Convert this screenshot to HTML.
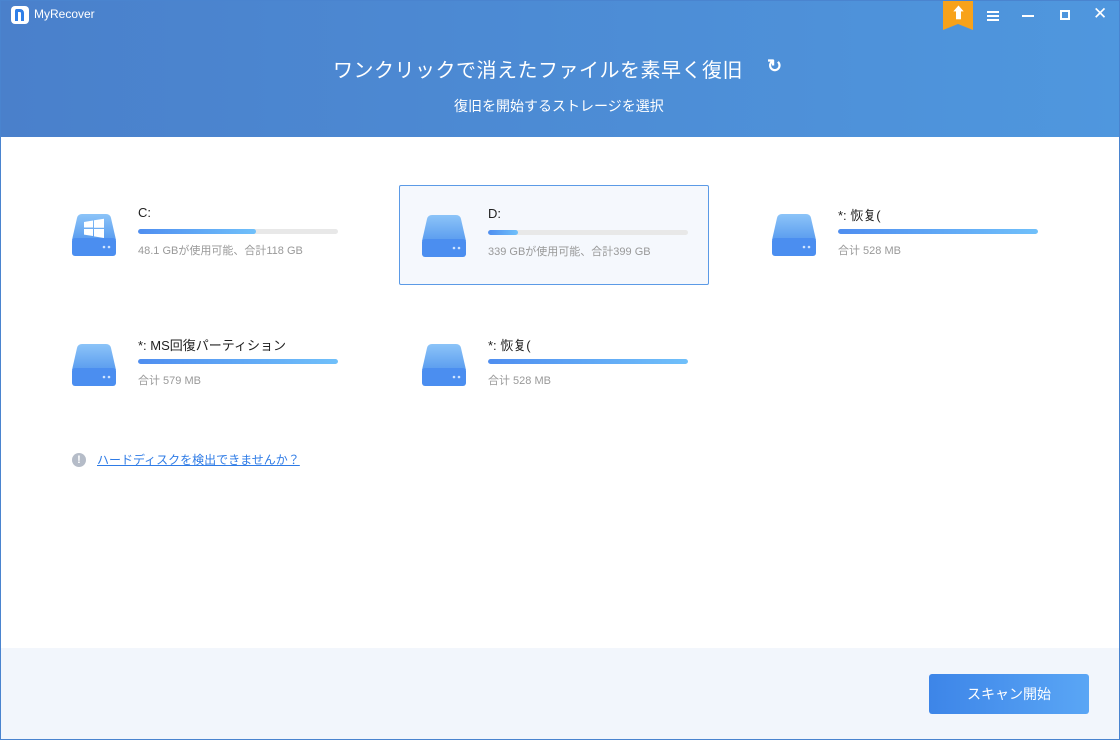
<!DOCTYPE html><html><head><meta charset="utf-8"><style>
*{margin:0;padding:0;box-sizing:border-box}
body{width:1120px;height:740px;overflow:hidden;background:#fff;font-family:"Liberation Sans","Noto Sans CJK JP",sans-serif;position:relative}
.hdr{position:absolute;left:0;top:0;width:1120px;height:137px;background:linear-gradient(90deg,#4a80cb,#4f97de)}
.t{position:absolute;color:#fff}
.card{position:absolute;width:310px;height:100px}
.card.sel{border:1px solid #5b9ae6;background:#f5f8fd;border-radius:2px}
.ic{position:absolute;left:12px;top:27px;width:44px;height:44px}
.nm{position:absolute;left:78px;top:20px;font-size:13px;color:#222}
.bar{position:absolute;left:78px;top:44px;width:200px;height:5px;background:#e8e8e8;border-radius:3px;overflow:hidden}
.bar i{display:block;height:100%;background:linear-gradient(90deg,#4f8ef0,#70c0fa);border-radius:3px}
.sz{position:absolute;left:78px;top:57px;font-size:11px;color:#999}
</style></head><body>
<div class="hdr"></div>
<div style="position:absolute;left:0;top:0;width:1120px;height:740px;border:1px solid #4a84cf;pointer-events:none;z-index:5"></div>
<div style="position:absolute;left:11px;top:6px;width:18px;height:18px;background:#fff;border-radius:4px"><div style="position:absolute;left:4px;top:3px;width:9px;height:12px;border:3px solid #2f7fe8;border-radius:2px 4px 0 0;border-bottom:none"></div></div>
<div class="t" style="left:34px;top:7px;font-size:12px">MyRecover</div>
<div style="position:absolute;left:943px;top:0;width:30px;height:30px;background:#f8a21a;clip-path:polygon(0 0,100% 0,100% 100%,50% 80%,0 100%)"></div>
<div class="t" style="left:951px;top:2px;font-size:15px;font-weight:bold">⬆</div>
<div style="position:absolute;left:987px;top:11px;width:12px;height:2px;background:#fff;box-shadow:0 4px #fff,0 8px #fff"></div>
<div style="position:absolute;left:1022px;top:15px;width:12px;height:2px;background:#fff"></div>
<div style="position:absolute;left:1060px;top:10px;width:10px;height:10px;border:2px solid #fff"></div>
<div class="t" style="left:1093px;top:4px;font-size:17px">✕</div>
<div class="t" style="left:333px;top:54px;font-size:20px;letter-spacing:0.5px">ワンクリックで消えたファイルを素早く復旧</div>
<div class="t" style="left:767px;top:56px;font-size:18px;font-weight:bold">↻</div>
<div class="t" style="left:454px;top:96px;font-size:14px">復旧を開始するストレージを選択</div>

<svg width="0" height="0" style="position:absolute"><defs><linearGradient id="g" x1="0" y1="0" x2="0" y2="1"><stop offset="0" stop-color="#8cc4f8"/><stop offset="1" stop-color="#5a9cef"/></linearGradient></defs></svg>
<div class="card" style="left:60px;top:185px"><svg class="ic" viewBox="0 0 44 44"><path d="M10 2h24q4 0 5 4l5 22H0l5-22q1-4 5-4z" fill="url(#g)"/><rect x="0" y="26" width="44" height="18" rx="3" fill="#4b8ef0"/><circle cx="32" cy="35" r="1.3" fill="#cfe4ff"/><circle cx="37" cy="35" r="1.3" fill="#cfe4ff"/><path d="M12 10l9-1.5v7h-9zM22 8.3l10-1.6v9H22zM12 17h9v7l-9-1.4zM22 17h10v9l-10-1.6z" fill="#fff"/></svg><div class="nm">C:</div><div class="bar"><i style="width:59%"></i></div><div class="sz">48.1 GBが使用可能、合計118 GB</div></div>
<div class="card sel" style="left:399px;top:185px"><svg class="ic" style="left:22px" viewBox="0 0 44 44"><path d="M10 2h24q4 0 5 4l5 22H0l5-22q1-4 5-4z" fill="url(#g)"/><rect x="0" y="26" width="44" height="18" rx="3" fill="#4b8ef0"/><circle cx="32" cy="35" r="1.3" fill="#cfe4ff"/><circle cx="37" cy="35" r="1.3" fill="#cfe4ff"/></svg><div class="nm" style="left:88px">D:</div><div class="bar" style="left:88px"><i style="width:15%"></i></div><div class="sz" style="left:88px">339 GBが使用可能、合計399 GB</div></div>
<div class="card" style="left:760px;top:185px"><svg class="ic" viewBox="0 0 44 44"><path d="M10 2h24q4 0 5 4l5 22H0l5-22q1-4 5-4z" fill="url(#g)"/><rect x="0" y="26" width="44" height="18" rx="3" fill="#4b8ef0"/><circle cx="32" cy="35" r="1.3" fill="#cfe4ff"/><circle cx="37" cy="35" r="1.3" fill="#cfe4ff"/></svg><div class="nm">*: 恢复(</div><div class="bar"><i style="width:100%"></i></div><div class="sz">合计 528 MB</div></div>
<div class="card" style="left:60px;top:315px"><svg class="ic" viewBox="0 0 44 44"><path d="M10 2h24q4 0 5 4l5 22H0l5-22q1-4 5-4z" fill="url(#g)"/><rect x="0" y="26" width="44" height="18" rx="3" fill="#4b8ef0"/><circle cx="32" cy="35" r="1.3" fill="#cfe4ff"/><circle cx="37" cy="35" r="1.3" fill="#cfe4ff"/></svg><div class="nm">*: MS回復パーティション</div><div class="bar"><i style="width:100%"></i></div><div class="sz">合计 579 MB</div></div>
<div class="card" style="left:410px;top:315px"><svg class="ic" viewBox="0 0 44 44"><path d="M10 2h24q4 0 5 4l5 22H0l5-22q1-4 5-4z" fill="url(#g)"/><rect x="0" y="26" width="44" height="18" rx="3" fill="#4b8ef0"/><circle cx="32" cy="35" r="1.3" fill="#cfe4ff"/><circle cx="37" cy="35" r="1.3" fill="#cfe4ff"/></svg><div class="nm">*: 恢复(</div><div class="bar"><i style="width:100%"></i></div><div class="sz">合计 528 MB</div></div>

<div style="position:absolute;left:72px;top:453px;width:14px;height:14px;border-radius:50%;background:#b5bcc8;color:#fff;font-size:11px;font-weight:bold;text-align:center;line-height:14px">!</div>
<div style="position:absolute;left:97px;top:451px;font-size:12px;color:#2e7be6;text-decoration:underline">ハードディスクを検出できませんか？</div>
<div style="position:absolute;left:0;top:648px;width:1120px;height:92px;background:#f2f6fc"></div>
<div style="position:absolute;left:929px;top:674px;width:160px;height:40px;background:linear-gradient(90deg,#3d85e8,#5aa6f5);border-radius:3px;color:#fff;font-size:14px;text-align:center;line-height:40px">スキャン開始</div>
</body></html>
